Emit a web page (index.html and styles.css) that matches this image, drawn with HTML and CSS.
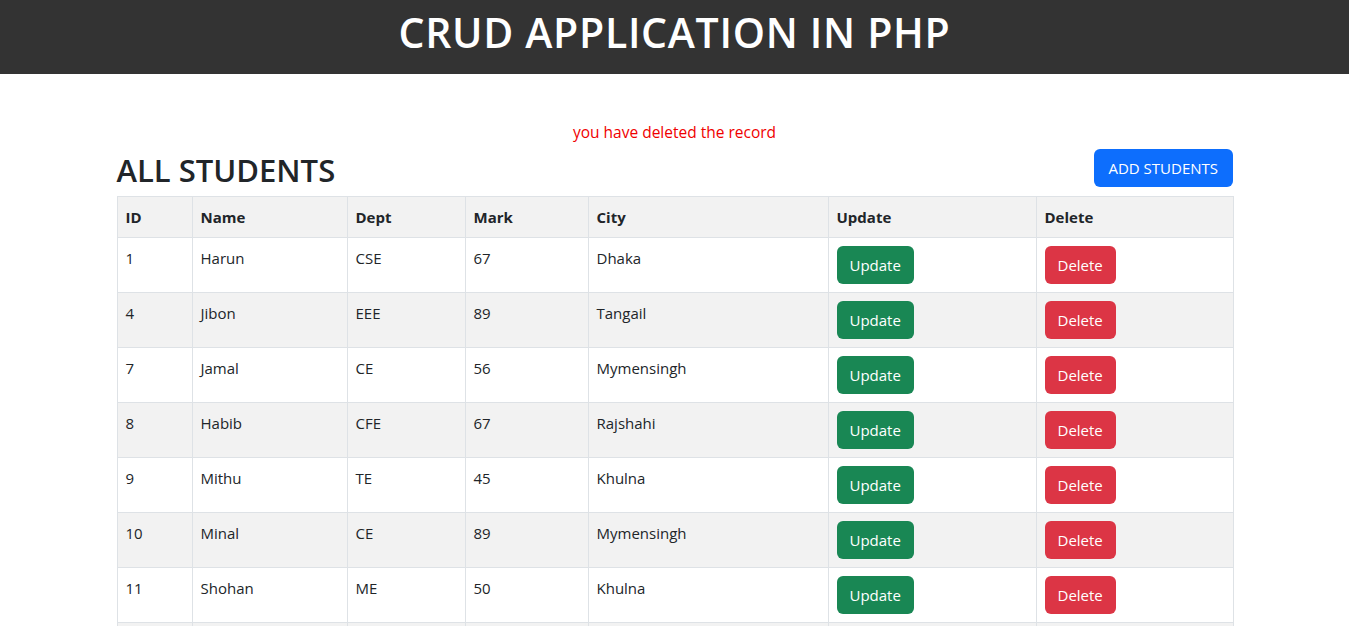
FILE: index.html
```html
<!DOCTYPE html>
<html lang="en">
<head>
<meta charset="utf-8">
<title>CRUD Application in PHP</title>
<link rel="stylesheet" href="styles.css">
</head>
<body>
<header class="topbar">
  <h1 class="title">CRUD APPLICATION IN PHP</h1>
</header>
<main class="container">
  <p class="msg">you have deleted the record</p>
  <div class="head-row">
    <h2 class="heading">ALL STUDENTS</h2>
    <button class="btn btn-primary">ADD STUDENTS</button>
  </div>
  <table class="table">
    <colgroup>
      <col class="c-id"><col class="c-name"><col class="c-dept"><col class="c-mark"><col class="c-city"><col class="c-upd"><col class="c-del">
    </colgroup>
    <thead>
      <tr><th>ID</th><th>Name</th><th>Dept</th><th>Mark</th><th>City</th><th>Update</th><th>Delete</th></tr>
    </thead>
    <tbody>
      <tr><td>1</td><td>Harun</td><td>CSE</td><td>67</td><td>Dhaka</td><td><button class="btn btn-success">Update</button></td><td><button class="btn btn-danger">Delete</button></td></tr>
      <tr><td>4</td><td>Jibon</td><td>EEE</td><td>89</td><td>Tangail</td><td><button class="btn btn-success">Update</button></td><td><button class="btn btn-danger">Delete</button></td></tr>
      <tr><td>7</td><td>Jamal</td><td>CE</td><td>56</td><td>Mymensingh</td><td><button class="btn btn-success">Update</button></td><td><button class="btn btn-danger">Delete</button></td></tr>
      <tr><td>8</td><td>Habib</td><td>CFE</td><td>67</td><td>Rajshahi</td><td><button class="btn btn-success">Update</button></td><td><button class="btn btn-danger">Delete</button></td></tr>
      <tr><td>9</td><td>Mithu</td><td>TE</td><td>45</td><td>Khulna</td><td><button class="btn btn-success">Update</button></td><td><button class="btn btn-danger">Delete</button></td></tr>
      <tr><td>10</td><td>Minal</td><td>CE</td><td>89</td><td>Mymensingh</td><td><button class="btn btn-success">Update</button></td><td><button class="btn btn-danger">Delete</button></td></tr>
      <tr><td>11</td><td>Shohan</td><td>ME</td><td>50</td><td>Khulna</td><td><button class="btn btn-success">Update</button></td><td><button class="btn btn-danger">Delete</button></td></tr>
      <tr class="row-more"><td></td><td></td><td></td><td></td><td></td><td></td><td></td></tr>
    </tbody>
  </table>
</main>
</body>
</html>
```

FILE: styles.css
```css
* { box-sizing: border-box; }
html, body { margin: 0; padding: 0; }
body {
  font-family: "Open Sans", "Noto Sans", "Liberation Sans", sans-serif;
  font-size: 15px;
  line-height: 24px;
  color: #212529;
  background: #fff;
}
.topbar {
  background: #333333;
  height: 74px;
  display: flex;
  justify-content: center;
  padding-top: 10px;
}
.title {
  margin: 0;
  color: #fff;
  font-size: 41px;
  font-weight: 600;
  letter-spacing: 0.7px;
  line-height: 44px;
}
.container {
  width: 1116px;
  margin: 0 auto;
}
.msg {
  margin: 48px 0 0;
  text-align: center;
  color: #f00000;
  font-size: 15.5px;
  line-height: 20px;
}
.head-row {
  display: flex;
  justify-content: space-between;
  align-items: center;
  margin-top: 7px;
  height: 38px;
}
.heading {
  margin: 0;
  font-size: 31px;
  font-weight: 600;
  line-height: 1.2;
  padding-top: 6px;
}
.btn {
  font-family: inherit;
  font-size: 15px;
  line-height: 24px;
  padding: 7px 13px;
  border: 0;
  border-radius: 6px;
  color: #fff;
  cursor: pointer;
}
.btn-primary { background: #0d6efd; padding: 7px 14.5px; }
.btn-success { background: #198754; }
.btn-danger { background: #dc3545; }
.table {
  width: 1116px;
  margin-top: 9px;
  border-collapse: collapse;
  table-layout: fixed;
}
.c-id { width: 75px; }
.c-name { width: 155px; }
.c-dept { width: 118px; }
.c-mark { width: 123px; }
.c-city { width: 240px; }
.c-upd { width: 208px; }
.c-del { width: 197px; }
.table th, .table td {
  border: 1px solid #dee2e6;
  padding: 8px 8px;
  text-align: left;
  vertical-align: top;
}
.table th {
  font-weight: 700;
  background: #f2f2f2;
  height: 41px;
}
.table td { height: 55px; }
.table tbody tr:nth-child(even) td { background: #f2f2f2; }
```
